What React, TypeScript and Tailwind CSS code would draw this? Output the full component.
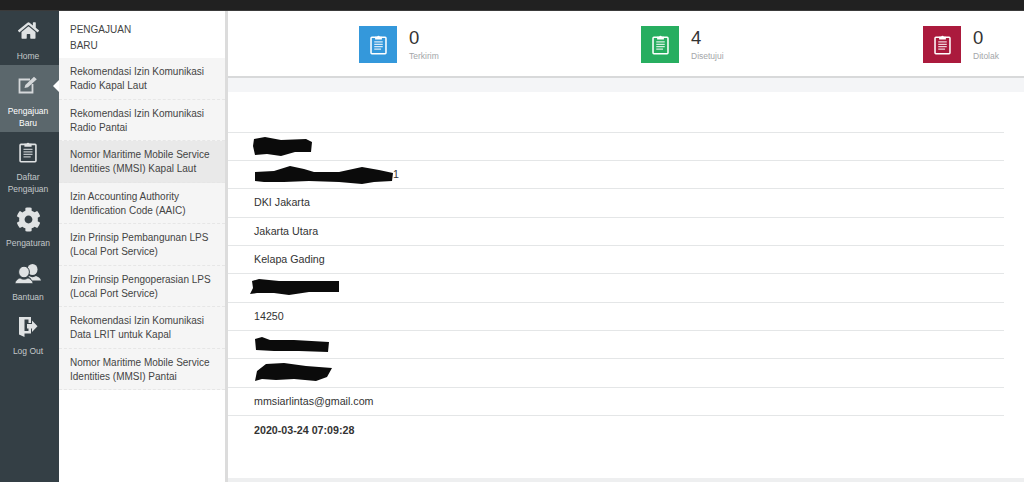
import type { ReactNode } from 'react'
import { FaCog, FaHome } from 'react-icons/fa'

const submenu = [
  ['Rekomendasi Izin Komunikasi', 'Radio Kapal Laut'],
  ['Rekomendasi Izin Komunikasi', 'Radio Pantai'],
  ['Nomor Maritime Mobile Service', 'Identities (MMSI) Kapal Laut'],
  ['Izin Accounting Authority', 'Identification Code (AAIC)'],
  ['Izin Prinsip Pembangunan LPS', '(Local Port Service)'],
  ['Izin Prinsip Pengoperasian LPS', '(Local Port Service)'],
  ['Rekomendasi Izin Komunikasi', 'Data LRIT untuk Kapal'],
  ['Nomor Maritime Mobile Service', 'Identities (MMSI) Pantai'],
]

function Clipboard({ className }: { className?: string }) {
  return (
    <svg viewBox="0 0 20 24" className={className} fill="none" stroke="currentColor">
      <rect x="1.2" y="3.5" width="17.6" height="19.3" rx="1" strokeWidth="1.8" />
      <path d="M6 2.8h2.4a1.7 1.7 0 0 1 3.2 0H14v3.4H6z" fill="currentColor" stroke="none" />
      <path d="M5 9h10M5 11.8h10M5 14.6h10M5 17.4h8" strokeWidth="1.4" opacity="0.8" />
    </svg>
  )
}

function EditIcon() {
  return (
    <svg viewBox="0 0 20 18" className="w-[20px] h-[18px]" fill="none" stroke="currentColor">
      <path d="M12 3.500H1.500v13h13V8" strokeWidth="1.800" />
      <path d="M6.500 12l.8-3L16 .8l2.800 2.400L10 11.200z" fill="currentColor" stroke="none" />
    </svg>
  )
}

function UsersIcon() {
  return (
    <svg viewBox="0 0 26 20" className="w-[26px] h-[20px]" fill="currentColor">
      <ellipse cx="17.500" cy="5.500" rx="5" ry="5.500" />
      <path d="M14 12c2 1.500 5 1.500 7 0 2 .8 4.300 2 5 4.500h-9c-.6-1.600-1.800-3-3.500-3.800z" />
      <ellipse cx="9" cy="8" rx="5.400" ry="5.800" stroke="#343f45" strokeWidth="1" />
      <path d="M5 14c2.300 1.800 5.700 1.800 8 0 2.400.9 4.500 2.500 5 5.500H0c.5-3 2.600-4.600 5-5.500z" stroke="#343f45" strokeWidth="0.6" />
    </svg>
  )
}

function LogoutIcon() {
  return (
    <svg viewBox="0 0 20 20" className="w-[20px] h-[20px]" fill="currentColor">
      <path d="M1 0h12v6h-2.500V2.500H6.500V14h4v-3H13v5.500H6.500V20L1 17.500z" />
      <path d="M9 7h5V3.500l5.500 5.800-5.500 5.800V11.500H9z" />
    </svg>
  )
}

function NavItem({ icon, label, active, className, labelClass }: { icon: ReactNode; label: ReactNode; active?: boolean; className: string; labelClass?: string }) {
  return (
    <div className={`relative flex flex-col items-center text-center pr-[3px] ${active ? 'bg-[#5b676c] text-white' : 'text-[#c3c8ca]'} ${className}`}>
      <div className={`flex items-center justify-center h-[26px] mb-[5px] ${active ? 'text-[#d5d8da]' : 'text-[#dfe2e3]'}`}>{icon}</div>
      <div className={`text-[8.5px] leading-[11.500px] ${labelClass ?? ''}`}>{label}</div>
      {active && (
        <div className="absolute right-0 top-[15px] w-0 h-0 border-y-[6px] border-y-transparent border-r-[6px] border-r-white" />
      )}
    </div>
  )
}

function Stat({ value, label, color }: { value: number; label: string; color: string }) {
  return (
    <div className="w-[282px] shrink-0 flex items-start pl-[131px] pt-[15px]">
      <div className={`w-[38px] h-[37px] flex items-center justify-center text-white ${color}`}>
        <Clipboard className="w-[17px] h-[21px]" />
      </div>
      <div className="ml-[12px]">
        <div className="text-[18.500px] leading-[24px] text-[#333]">{value}</div>
        <div className="text-[8.500px] leading-[11px] mt-[1px] text-[#a3a6a9]">{label}</div>
      </div>
    </div>
  )
}

// black marker strokes that hide the private values in the screenshot
function Scribble({ width, height, d, className }: { width: number; height: number; d: string; className?: string }) {
  return (
    <svg width={width} height={height} viewBox={`0 0 ${width} ${height}`} className={className} fill="#0b0b0b">
      <path d={d} />
    </svg>
  )
}

function Row({ children, bold, last }: { children?: ReactNode; bold?: boolean; last?: boolean }) {
  return (
    <div className={`h-[28.350px] flex items-center pl-[26px] pb-[1px] text-[10.700px] text-[#333] ${last ? '' : 'border-b border-[#e4e6e7]'} ${bold ? 'font-bold' : ''}`}>
      {children}
    </div>
  )
}

export default function App() {
  return (
    <div className="w-[1024px] h-[482px] overflow-hidden flex flex-col bg-white font-['Liberation_Sans',Arial,sans-serif]">
      <div className="h-[11px] shrink-0 bg-[#212121] border-b border-[#3a3a3a]" />
      <div className="flex flex-1 min-h-0">
        <div className="w-[59px] shrink-0 bg-[#343f45]">
          <NavItem className="h-[54px] pt-[6px]" labelClass="mt-[3px]" icon={<FaHome size={21} />} label="Home" />
          <NavItem className="h-[67px] pt-[7px]" labelClass="mt-[3px]" active icon={<EditIcon />} label={<>Pengajuan<br />Baru</>} />
          <NavItem className="h-[66px] pt-[7px]" labelClass="mt-[2px]" icon={<Clipboard className="w-[18px] h-[22px]" />} label={<>Daftar<br />Pengajuan</>} />
          <NavItem className="h-[55px] pt-[8px]" labelClass="mt-[1px]" icon={<FaCog size={25} />} label="Pengaturan" />
          <NavItem className="h-[53px] pt-[8px]" icon={<UsersIcon />} label="Bantuan" />
          <NavItem className="h-[54px] pt-[8px]" labelClass="mt-[1px]" icon={<LogoutIcon />} label="Log Out" />
        </div>

        <div className="w-[166px] shrink-0 bg-white text-[#444]">
          <div className="h-[47px] pl-[11px] pt-[11px] text-[10px] leading-[15.500px] text-[#444]">
            PENGAJUAN<br />BARU
          </div>
          {submenu.map((lines, i) => (
            <div
              key={i}
              className={`h-[41.500px] pl-[11px] pt-[7px] text-[10px] leading-[14.200px] border-b border-dashed border-[#e6e6e6] ${i === 2 ? 'bg-[#e9e9e9]' : 'bg-[#f5f5f5]'}`}
            >
              {lines[0]}<br />{lines[1]}
            </div>
          ))}
        </div>

        <div className="w-[3px] shrink-0 bg-[#dcdcdc]" />

        <div className="flex-1 min-w-0 flex flex-col">
          <div className="h-[67px] shrink-0 flex overflow-hidden border-b-2 border-[#d8d9da]">
            <Stat value={0} label="Terkirim" color="bg-[#3498db]" />
            <Stat value={4} label="Disetujui" color="bg-[#27ae60]" />
            <Stat value={0} label="Ditolak" color="bg-[#ab1a3d]" />
          </div>
          <div className="h-[14px] shrink-0 bg-[#f4f5f7]" />
          <div className="flex-1 flex flex-col">
            <div className="w-[776px] pt-[11px]">
              <div className="h-[29.500px] border-b border-[#e4e6e7]" />
              <Row>
                <Scribble className="-ml-[3px]" width={61} height={20} d="M3 3 L14 1 L30 4 L55 3 L61 6 L60 16 L44 16 L30 20 L16 18 L4 19 L2 10z" />
              </Row>
              <Row>
                <Scribble width={139} height={19} d="M1 7 L20 6 L36 1 L50 4 L60 7 L85 7 L108 2 L125 5 L139 8 L138 16 L120 17 L108 19 L85 17 L55 16 L30 17 L10 17 L1 16z" />
                <span>1</span>
              </Row>
              <Row>DKI Jakarta</Row>
              <Row>Jakarta Utara</Row>
              <Row>Kelapa Gading</Row>
              <Row>
                <Scribble className="-ml-[5px]" width={90} height={16} d="M3 2 L10 0 L30 2 L90 2 L90 13 L60 13 L40 16 L25 14 L8 14 L1 15 L4 9z" />
              </Row>
              <Row>14250</Row>
              <Row>
                <Scribble width={75} height={15} d="M1 2 L8 0 L16 3 L40 3 L75 5 L74 15 L45 14 L20 14 L2 13z" />
              </Row>
              <Row>
                <Scribble width={78} height={19} d="M3 8 L12 1 L30 0 L52 3 L78 5 L73 14 L62 18 L40 16 L22 17 L8 16 L1 18z" />
              </Row>
              <Row>mmsiarlintas@gmail.com</Row>
              <Row bold last>2020-03-24 07:09:28</Row>
            </div>
          </div>
          <div className="h-[4px] shrink-0 bg-[#eeeff0]" />
        </div>
      </div>
    </div>
  )
}
